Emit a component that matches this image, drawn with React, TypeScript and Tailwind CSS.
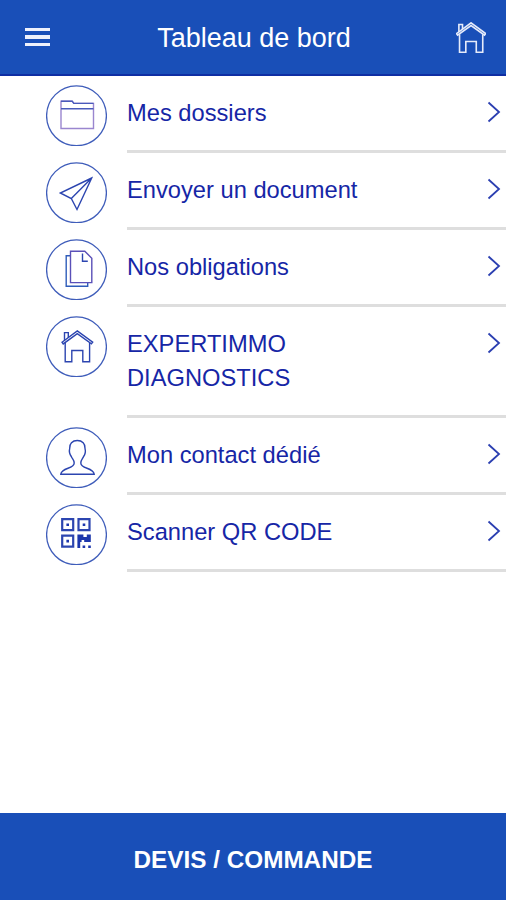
import React from "react";

interface IMenuItem {
  label: string;
  icon: React.ReactNode;
  tall?: boolean;
}

const FolderIcon = () => (
  <>
    <path d="M15 43.5V16.2h11.2l1.6 2.2h19.7v25.1z" stroke="#9a86cf" />
    <path d="M15 23.7h32.5M15 16.2h11.2l1.6 2.2h19.7" stroke="#4a5abb" />
  </>
);

const PlaneIcon = () => (
  <path d="M45.7 16L14.3 31l11 5.5L31 47.5zM45.7 16L25.3 36.5" />
);

const DocumentsIcon = () => (
  <>
    <path d="M24.5 16.7H20.2V47.2h21.5v-3.6" stroke="#2f5cba" />
    <path d="M24.5 12.3h14.3l7 6.9v24.4H24.5z" stroke="#5a50b8" />
    <path d="M36.5 14.5v7.8h5.3" />
  </>
);

const HouseIcon = () => (
  <>
    <path d="M19.2 27v18.8h6.6V34.5h11v11.3h6.8V27" />
    <path d="M16 26.2l15.3-11.3 15.4 11.3-1.3 1.7-14.1-10.2-14.1 10.2z" />
    <path d="M18.5 24.2v-7.6h3.8v5" />
  </>
);

const ContactIcon = () => (
  <path d="M31.3 13.5c-5 0-8 3.2-7.6 7.8-.8 3.2.2 6.2 1.6 8.2.8 2.2 2.9 3.5 2.9 6.5 0 6.2-12.6 4.2-13.4 11.2h33.4c-.8-7-13.4-5-13.4-11.2 0-3 2-4.3 2.8-6.5 1.4-2 2.2-5 1.4-8.2.4-4.6-2.7-7.8-7.7-7.8z" />
);

const QrIcon = () => (
  <>
    <g strokeWidth="2.2">
      <path d="M16.2 15.2h11v11h-11zM32.5 15.2h11v11h-11zM16.2 31.6h11v11h-11z" />
    </g>
    <path
      d="M20.4 19.4h2.6v2.6h-2.6zM36.7 19.4h2.6v2.6h-2.6zM20.4 35.8h2.6v2.6h-2.6zM31.4 30.4h6v2.6h3.4v-2.6h4v7.6h-6.6v-2h-2.6v2h-1.4v6h-2.8zM36.6 41.4h2.6V44h-2.6zM42.2 41.4h2.6V44h-2.6z"
      fill="currentColor"
      stroke="none"
    />
  </>
);

const items: IMenuItem[] = [
  { label: "Mes dossiers", icon: <FolderIcon /> },
  { label: "Envoyer un document", icon: <PlaneIcon /> },
  { label: "Nos obligations", icon: <DocumentsIcon /> },
  { label: "EXPERTIMMO DIAGNOSTICS", icon: <HouseIcon />, tall: true },
  { label: "Mon contact dédié", icon: <ContactIcon /> },
  { label: "Scanner QR CODE", icon: <QrIcon /> },
];

const Header = () => (
  <header className="flex h-[76px] shrink-0 items-center justify-between border-b-2 border-[#0f2ea3] bg-[#194fb8] pl-[25px] pr-[20px] text-white">
    <button className="flex w-[25px] flex-col gap-[4px]">
      <span className="h-[3.5px] bg-[#eef1fc]" />
      <span className="h-[3.5px] bg-[#eef1fc]" />
      <span className="h-[3.5px] bg-[#eef1fc]" />
    </button>
    <h1 className="ml-[2px] pt-[2px] text-[27px] leading-none">
      Tableau de bord
    </h1>
    <svg
      className="h-[31px] w-[30px]"
      viewBox="15.5 14 31.5 32.6"
      fill="none"
      stroke="#e6ebfa"
      strokeWidth="1.7"
    >
      <HouseIcon />
    </svg>
  </header>
);

const MenuRow: React.FC<{ item: IMenuItem }> = ({ item }) => (
  <li className={`flex pl-[46px] ${item.tall ? "h-[111px]" : "h-[77px]"}`}>
    <svg
      className="mt-[9px] h-[61px] w-[61px] shrink-0 text-[#1c36ac]"
      viewBox="0 0 61 61"
      fill="none"
      stroke="#2c45b0"
      strokeWidth="1.4"
    >
      <circle cx="30.5" cy="30.8" r="29.9" stroke="#3f5dba" strokeWidth="1.3" />
      {item.icon}
    </svg>
    <div className="ml-[20px] flex flex-1 justify-between border-b-3 border-[#dedede] pt-[20px]">
      <span className="w-[240px] text-[23.7px] leading-[34px] text-[#1626a6]">
        {item.label}
      </span>
      <svg
        className="mr-[5px] mt-[5px] h-[22px] w-[14px]"
        viewBox="0 0 14 22"
        fill="none"
        stroke="#2b3fb1"
        strokeWidth="1.8"
      >
        <path d="M1.5 1.5L12 11L1.5 20.5" />
      </svg>
    </div>
  </li>
);

export default function App() {
  return (
    <div className="flex h-[900px] w-[506px] flex-col bg-white font-['Liberation_Sans',Arial,sans-serif]">
      <Header />
      <ul className="flex-1">
        {items.map((item) => (
          <MenuRow key={item.label} item={item} />
        ))}
      </ul>
      <button className="flex h-[87px] shrink-0 items-center justify-center bg-[#194fb8] pt-[8px] text-[24.3px] font-bold text-white">
        DEVIS / COMMANDE
      </button>
    </div>
  );
}
